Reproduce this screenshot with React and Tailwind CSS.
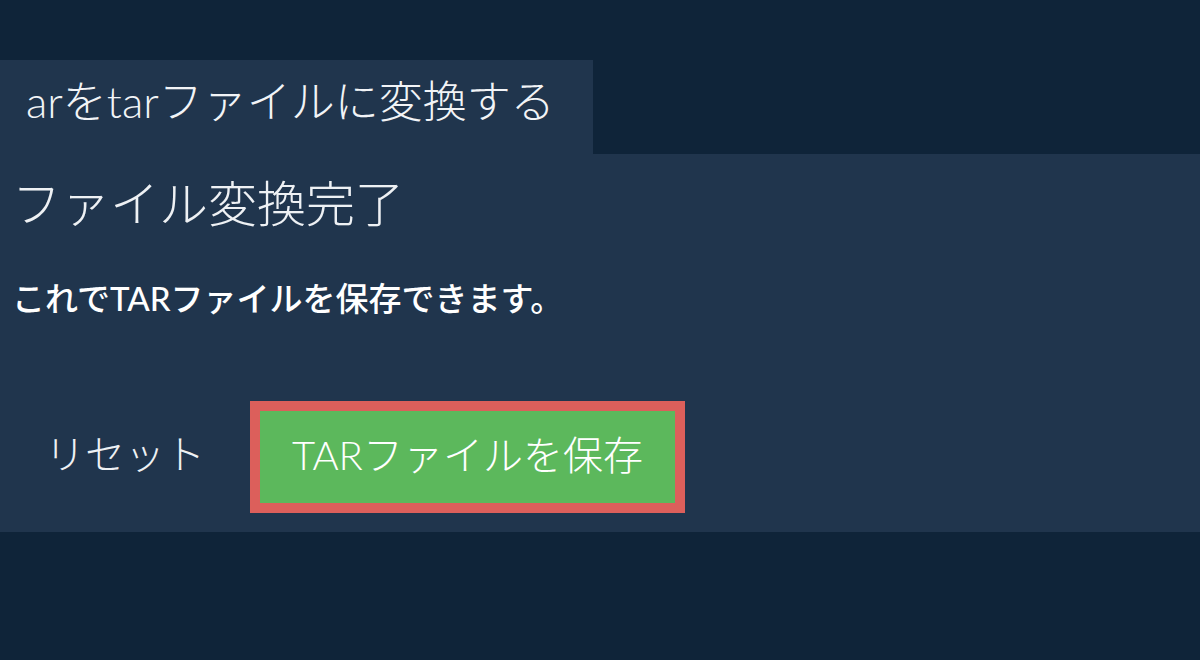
export default function App() {
  const font = { fontFamily: 'Lato, "Noto Sans CJK JP", sans-serif' };
  return (
    <div className="h-[660px] w-full bg-[#0f2439] pt-[60px] text-white" style={font}>
      <div className="flex h-[94px] w-[593px] items-center bg-[#20354d] pb-[12px] pl-[26px]">
        <h1 className="text-[44px] font-light leading-none text-[#f2f4f7]">arをtarファイルに変換する</h1>
      </div>
      <div className="h-[378px] bg-[#20354d] px-[12px] pt-[20px]">
        <h2 className="text-[49px] font-light leading-[58px] text-[#eef1f4]">ファイル変換完了</h2>
        <p className="mt-[48px] text-[33px] font-medium leading-[36px]">これでTARファイルを保存できます。</p>
        <div className="mt-[85px] flex items-center gap-[12px]">
          <button className="h-[112px] px-[33px] pb-[6px] text-[40px] font-light text-[#eef1f4]">リセット</button>
          <button className="h-[112px] border-[10px] border-[#dc5f5b] bg-[#5cb85c] px-[32px] pb-[4px] text-[40px] font-light text-white">
            TARファイルを保存
          </button>
        </div>
      </div>
    </div>
  );
}
